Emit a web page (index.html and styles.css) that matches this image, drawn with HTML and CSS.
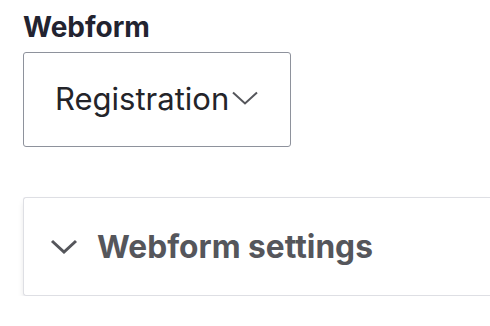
FILE: index.html
```html
<!DOCTYPE html>
<html>
<head>
<meta charset="utf-8">
<link rel="stylesheet" href="styles.css">
</head>
<body>
<div class="page">
  <div class="field">
    <label class="label">Webform</label>
    <div class="select">
      <span class="select-text">Registration</span>
      <svg class="select-chevron" width="26" height="14" viewBox="0 0 26 14"><path d="M1 1.5 L13 12.5 L25 1.5" fill="none" stroke="#55565b" stroke-width="2"/></svg>
    </div>
  </div>
  <div class="details">
    <div class="summary">
      <svg class="summary-chevron" width="28" height="15" viewBox="0 0 28 15"><path d="M2 2 L14 13 L26 2" fill="none" stroke="#55565b" stroke-width="3"/></svg>
      <span class="summary-text">Webform settings</span>
    </div>
  </div>
</div>
</body>
</html>
```
FILE: styles.css
```css
html, body {
  margin: 0;
  padding: 0;
  background: #ffffff;
}
.page {
  padding: 12px 0 0 23px;
  font-family: Inter, "Liberation Sans", sans-serif;
}
.field {
  display: flex;
  flex-direction: column;
  align-items: flex-start;
}
.label {
  font-size: 28px;
  font-weight: 700;
  color: #222330;
  line-height: 30px;
}
.select {
  margin-top: 10px;
  box-sizing: border-box;
  width: 268px;
  height: 95px;
  border: 1.5px solid #8e929c;
  border-radius: 3px;
  display: flex;
  align-items: center;
  padding-left: 31px;
  gap: 3px;
}
.select-text {
  font-size: 31px;
  color: #232429;
  line-height: 1;
  margin-top: -3px;
}
.select-chevron {
  margin-top: -4px;
}
.details {
  margin-top: 50px;
  box-sizing: border-box;
  height: 99px;
  border: 1.5px solid #dedfe4;
  border-right: none;
  border-radius: 3px 0 0 3px;
  box-shadow: 0 4px 6px -1px rgba(0,0,0,0.12);
  display: flex;
  align-items: center;
}
.summary {
  display: flex;
  align-items: center;
  padding-left: 26px;
  gap: 19px;
}
.summary-text {
  font-size: 31.7px;
  font-weight: 700;
  color: #55565b;
  line-height: 1;
}
```
